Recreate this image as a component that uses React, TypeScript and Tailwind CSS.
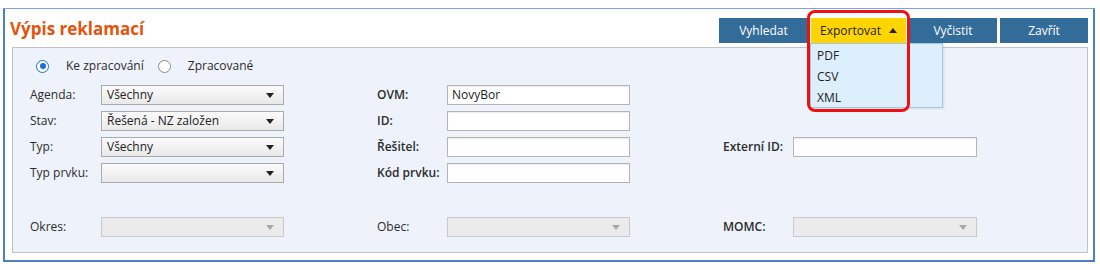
import { useState } from 'react';

const font = "font-['Segoe_UI','Open_Sans',sans-serif]";

function Arrow({ disabled }: { disabled?: boolean }) {
  return (
    <svg width="8" height="5" viewBox="0 0 8 5" className="shrink-0">
      <path d="M0 0h8L4 5z" fill={disabled ? '#a8a8a8' : '#222'} />
    </svg>
  );
}

function Select({ value, disabled }: { value?: string; disabled?: boolean }) {
  return (
    <div
      className={
        'flex h-[20px] items-center justify-between border pl-[5px] pr-[9px] text-[12px] ' +
        (disabled
          ? 'border-[#c9c9c9] bg-[#ebebeb]'
          : 'border-[#aaaaaa] bg-gradient-to-b from-[#fbfbfb] to-[#e9e9e9] text-[#222]')
      }
    >
      <span>{value}</span>
      <Arrow disabled={disabled} />
    </div>
  );
}

function Input({ value }: { value?: string }) {
  return (
    <div className="flex h-[20px] items-center border border-[#b4b4b4] bg-white pl-[4px] text-[12px] text-[#222] shadow-[inset_0_1px_1px_rgba(0,0,0,0.08)]">
      {value}
    </div>
  );
}

function Label({ children, strong }: { children: React.ReactNode; strong?: boolean }) {
  return (
    <div className={'text-[12px] text-[#2b2b2b] ' + (strong ? 'font-semibold' : '')}>{children}</div>
  );
}

function Radio({ checked }: { checked?: boolean }) {
  return checked ? (
    <span className="flex h-[13px] w-[13px] shrink-0 items-center justify-center rounded-full border-[1.5px] border-[#1a6fd8] bg-white">
      <span className="h-[6px] w-[6px] rounded-full bg-[#1a6fd8]" />
    </span>
  ) : (
    <span className="block h-[13px] w-[13px] shrink-0 rounded-full border border-[#8a8a8a] bg-white" />
  );
}

export default function App() {
  const [mode] = useState('ke');

  return (
    <div className={`${font} h-[270px] w-[1100px] bg-white pt-[8px] pl-[3px]`}>
      <div className="relative h-[254px] w-[1092px] border-2 border-t border-[#4f7fc0] border-t-[#7ea3d6] pl-[7px] pr-[5px]">
        <div className="flex items-start justify-between pt-[9px]">
          <h1 className="-ml-[2px] mt-[-1px] text-[17px] font-bold leading-[24px] text-[#e4530d]">Výpis reklamací</h1>
          <div className="flex gap-[3px]">
            <button className="h-[25px] w-[89px] bg-[#336c99] text-[12px] text-white">Vyhledat</button>
            <div className="relative">
              <button className="flex h-[25px] w-[95px] items-center justify-center gap-[8px] bg-[#fed500] text-[12px] text-[#222]">
                Exportovat
                <svg width="8" height="5" viewBox="0 0 8 5">
                  <path d="M4 0l4 5H0z" fill="#222" />
                </svg>
              </button>
              <div className="absolute left-[-1px] top-[25px] z-10 h-[65px] w-[133px] border border-[#a3c5e8] bg-[#ddeefc] pl-[6px] pt-[1px] text-[12px] leading-[21px] text-[#222] shadow-[1px_1px_2px_rgba(0,0,0,0.1)]">
                <div>PDF</div>
                <div>CSV</div>
                <div>XML</div>
              </div>
              <div className="absolute left-[-4px] top-[-8px] z-20 h-[102px] w-[103px] rounded-[8px] border-[3px] border-[#ee1111]" />
            </div>
            <button className="h-[25px] w-[88px] bg-[#336c99] text-[12px] text-white">Vyčistit</button>
            <button className="h-[25px] w-[88px] bg-[#336c99] text-[12px] text-white">Zavřít</button>
          </div>
        </div>

        <div className="mt-[4px] h-[206px] border border-[#c3c3c3] bg-[#eef3fb] pl-[17px] pt-[10px] text-[#2b2b2b]">
          <div className="flex h-[16px] items-center text-[12px]">
            <span className="ml-[6px]"><Radio checked={mode === 'ke'} /></span>
            <span className="ml-[17px]">Ke zpracování</span>
            <span className="ml-[14px]"><Radio /></span>
            <span className="ml-[17px]">Zpracované</span>
          </div>

          <div className="mt-[11px] grid grid-cols-[71px_183px_93px_70px_183px_93px_70px_184px] items-center gap-y-[6px]">
            <Label>Agenda:</Label>
            <Select value="Všechny" />
            <div />
            <Label strong>OVM:</Label>
            <Input value="NovyBor" />
            <div />
            <div />
            <div />

            <Label>Stav:</Label>
            <Select value="Řešená - NZ založen" />
            <div />
            <Label strong>ID:</Label>
            <Input />
            <div />
            <div />
            <div />

            <Label>Typ:</Label>
            <Select value="Všechny" />
            <div />
            <Label strong>Řešitel:</Label>
            <Input />
            <div />
            <Label strong>Externí ID:</Label>
            <Input />

            <Label>Typ prvku:</Label>
            <Select />
            <div />
            <Label strong>Kód prvku:</Label>
            <Input />
            <div />
            <div />
            <div />
          </div>

          <div className="mt-[34px] grid grid-cols-[71px_183px_93px_70px_183px_93px_70px_184px] items-center">
            <Label>Okres:</Label>
            <Select disabled />
            <div />
            <Label>Obec:</Label>
            <Select disabled />
            <div />
            <Label strong>MOMC:</Label>
            <Select disabled />
          </div>
        </div>
      </div>
    </div>
  );
}
